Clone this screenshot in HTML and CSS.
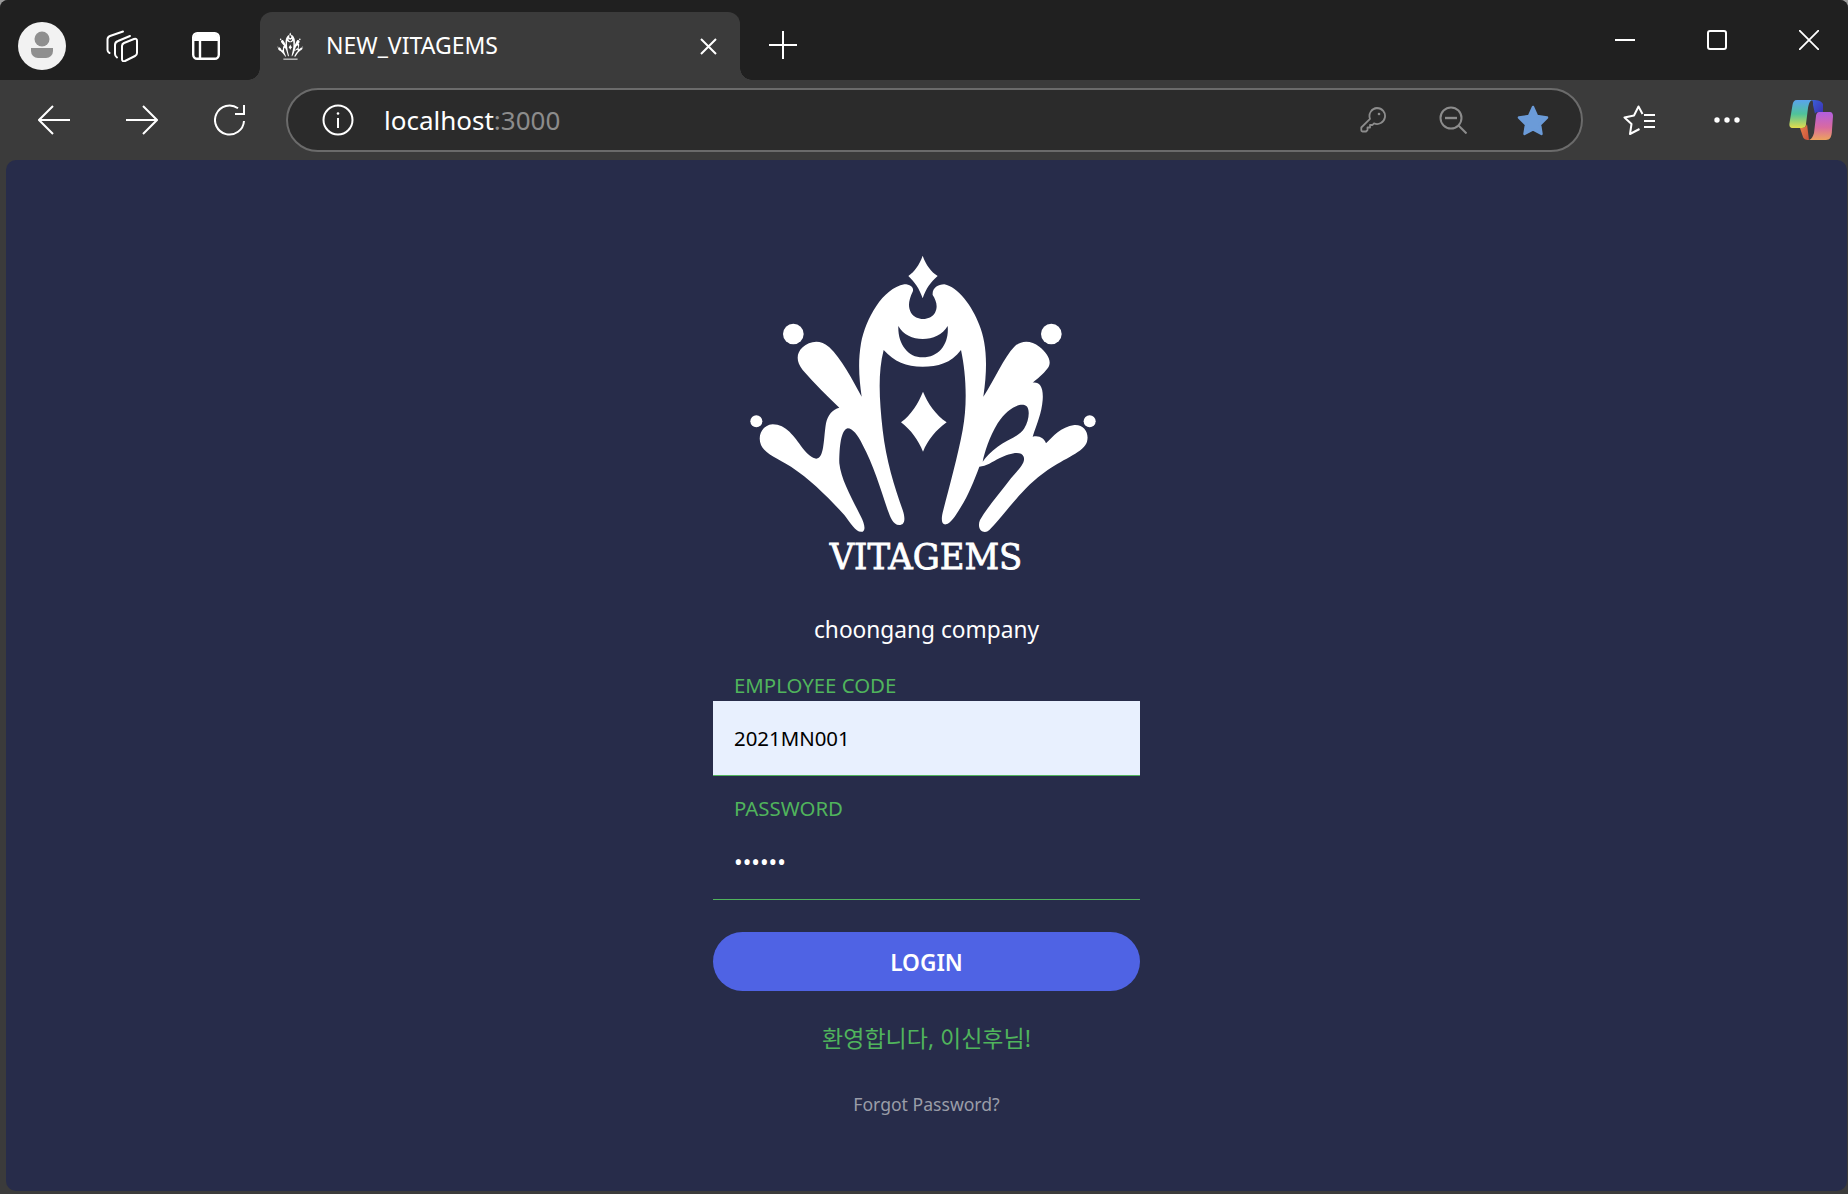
FILE: index.html
```html
<!DOCTYPE html>
<html lang="ko">
<head>
<meta charset="utf-8">
<title>NEW_VITAGEMS</title>
<link rel="stylesheet" href="styles.css">
</head>
<body>
<div class="window">
  <header class="titlebar">
    <div class="avatar">
      <svg width="48" height="48" viewBox="0 0 48 48"><circle cx="24" cy="24" r="24" fill="#f2f2f2"/><circle cx="24" cy="17" r="7.5" fill="#8f8f8f"/><path d="M13 26h22v3a7 7 0 0 1-7 7h-8a7 7 0 0 1-7-7z" fill="#8f8f8f"/></svg>
    </div>
    <svg class="ic-tabs" width="32" height="32" viewBox="0 0 32 32" fill="none" stroke="#fff" stroke-width="2" stroke-linecap="round" stroke-linejoin="round"><path d="M16 16q0-2 2-3l10-4q3-1 3 2v12q0 2-2 3l-10 5q-3 1-3-2z"/><path d="M24 6l-12 5q-3 1-3 4v9q0 2 2 3.500"/><path d="M17 1.500L4 6q-2.500 1-2.500 3.500V20q0 2 2 3"/></svg>
    <svg class="ic-vtabs" width="28" height="28" viewBox="0 0 28 28"><rect x="1.200" y="1.200" width="25.600" height="25.600" rx="4" fill="none" stroke="#fff" stroke-width="2.400"/><path d="M2 5a3 3 0 0 1 3-3h18a3 3 0 0 1 3 3v4H2z" fill="#fff"/><path d="M8 8v19" stroke="#fff" stroke-width="2.400"/></svg>
    <div class="tab">
      <svg class="favicon" width="29" height="31" viewBox="0 0 1170 1050" preserveAspectRatio="none"><use href="#mark"/><rect x="298" y="930" width="572" height="50" fill="#bbb"/></svg>
      <span class="tab-title">NEW_VITAGEMS</span>
      <svg class="tab-close" width="17" height="17" viewBox="0 0 17 17" stroke="#fff" stroke-width="2"><path d="M1 1l15 15M16 1L1 16"/></svg>
    </div>
    <svg class="ic-plus" width="28" height="28" viewBox="0 0 28 28" stroke="#fff" stroke-width="2"><path d="M14 0v28M0 14h28"/></svg>
    <div class="win-controls">
      <svg width="20" height="20" viewBox="0 0 20 20" stroke="#fff" stroke-width="2"><path d="M0 10h20"/></svg>
      <svg width="20" height="20" viewBox="0 0 20 20"><rect x="1" y="1" width="18" height="18" rx="2" fill="none" stroke="#fff" stroke-width="2"/></svg>
      <svg width="20" height="20" viewBox="0 0 20 20" stroke="#fff" stroke-width="1.800"><path d="M0 0l20 20M20 0L0 20"/></svg>
    </div>
  </header>

  <nav class="toolbar">
    <svg class="ic-back" width="32" height="30" viewBox="0 0 32 30" fill="none" stroke="#fff" stroke-width="2"><path d="M32 15H1M15 1L1 15l14 14"/></svg>
    <svg class="ic-forward" width="32" height="30" viewBox="0 0 32 30" fill="none" stroke="#fff" stroke-width="2"><path d="M0 15h31M17 1l14 14-14 14"/></svg>
    <svg class="ic-reload" width="32" height="32" viewBox="0 0 32 32" fill="none" stroke="#fff" stroke-width="2"><path d="M24 4.300A14.500 14.500 0 1 0 30 17"/><path d="M30 1v9H21"/></svg>
    <div class="address">
      <svg class="ic-info" width="32" height="32" viewBox="0 0 32 32" fill="none" stroke="#fff" stroke-width="2"><circle cx="16" cy="16" r="14.500"/><path d="M16 14v10"/><circle cx="16" cy="9.500" r="1.300" fill="#fff" stroke="none"/></svg>
      <span class="url">localhost<span class="url-port">:3000</span></span>
      <svg class="ic-key" width="26" height="26" viewBox="0 0 26 26" fill="none" stroke="#8c8c8c" stroke-width="1.800" stroke-linejoin="round"><path d="M17 1a8 8 0 1 1-3 15.400l-1.500 1.600H10v2.500H7.500V23L6 24.500H2.500a1.200 1.200 0 0 1-1.200-1.200V20.500L10 11.800A8 8 0 0 1 17 1z"/><circle cx="19" cy="7" r="1.300" fill="#8c8c8c" stroke="none"/></svg>
      <svg class="ic-zoom" width="28" height="28" viewBox="0 0 28 28" fill="none" stroke="#8c8c8c" stroke-width="2"><circle cx="12" cy="12" r="10.500"/><path d="M6 12h12" stroke-width="2.400"/><path d="M19.500 19.500l8 8"/></svg>
      <svg class="ic-star" width="32" height="31" viewBox="0 0 32 31"><path d="M16 2l4 9 10 1.500-7 7 1.500 9.500-8.500-4.500L7.500 29 9 19.500l-7-7L12 11z" fill="#6b9bd8" stroke="#6b9bd8" stroke-width="2.500" stroke-linejoin="round"/></svg>
    </div>
    <svg class="ic-fav" width="32" height="30" viewBox="0 0 32 30" fill="none" stroke="#fff" stroke-width="2" stroke-linejoin="round"><path d="M16.500 24L7 29l1.500-10-7-6.500 9.500-2L15.500 1.500 19.500 9"/><path d="M21 10h11M21 16h11M21 22h11"/></svg>
    <svg class="ic-more" width="26" height="6" viewBox="0 0 26 6" fill="#fff"><circle cx="3" cy="3" r="2.700"/><circle cx="13" cy="3" r="2.700"/><circle cx="23" cy="3" r="2.700"/></svg>
    <svg class="ic-copilot" width="44" height="40" viewBox="9 10 44 40">
      <defs>
        <linearGradient id="cpA" x1="0" y1="0" x2="0" y2="1"><stop offset="0" stop-color="#5aa3ee"/><stop offset=".5" stop-color="#4fc39a"/><stop offset="1" stop-color="#e3dc4c"/></linearGradient>
        <linearGradient id="cpB" x1="0" y1="0" x2="0" y2="1"><stop offset="0" stop-color="#b25fe0"/><stop offset=".55" stop-color="#d96aa0"/><stop offset="1" stop-color="#eda35d"/></linearGradient>
        <linearGradient id="cpC" x1="0" y1="0" x2="1" y2="1"><stop offset="0" stop-color="#3a62d8"/><stop offset="1" stop-color="#3c2fb0"/></linearGradient>
        <linearGradient id="cpD" x1="0" y1="0" x2="1" y2="1"><stop offset="0" stop-color="#e9824a"/><stop offset="1" stop-color="#c9503c"/></linearGradient>
      </defs>
      <path d="M31 10c5 0 10 0 12 4v8h-5c-2 0-3 1-3 2l-2-9c0-3 0-5-2-5z" fill="url(#cpC)"/>
      <path d="M20 38c4 0 6-1 7-4l2 16c-4 0-5-1-6-3z" fill="url(#cpD)"/>
      <path d="M17 10h16c-3 0-4 3-5 8l-2 16c0 3-2 4-5 4h-8c-3 0-4-2-3.500-5l3-18c.500-3 1.500-5 4.500-5z" fill="url(#cpA)"/>
      <path d="M40 22h10c2 0 3 2 3 4l-1 14c-.200 7-2 10-6 10H29c3-1 4-4 5-7l2-17c.500-2.500 1-4 4-4z" fill="url(#cpB)"/>
    </svg>
  </nav>

  <main class="page">
    <svg class="logo" width="390" height="350" viewBox="0 0 1170 1050" role="img" aria-label="VITAGEMS">
      <g id="mark" fill="#fff">
        <path d="M575 47C585 75 600 95 620 108C600 125 585 145 575 175C565 145 550 125 532 108C550 95 565 75 575 47Z"/>
        <path d="M576 455C590 490 615 525 647 547C615 570 590 600 576 635C562 600 540 570 510 547C540 525 562 490 576 455Z"/>
        <circle cx="187" cy="282" r="31"/><circle cx="961" cy="282" r="31"/><circle cx="76" cy="544" r="18"/><circle cx="1076" cy="544" r="18"/>
        <path fill-rule="evenodd" d="M545 155C533 180 530 200 540 218C555 243 598 243 612 218C622 200 615 180 605 165C603 145 620 133 640 133C680 140 725 200 745 255C765 305 772 370 757 470C790 420 820 350 850 320C870 300 900 300 925 320C950 340 965 365 950 385C935 405 920 415 905 428C925 425 938 440 935 480C932 520 918 550 905 590C925 585 940 595 945 610C965 590 990 560 1030 555C1060 553 1075 580 1068 605C1060 635 1000 655 950 690C900 725 870 760 840 795C815 825 795 850 775 870C760 885 735 870 747 840C770 800 810 755 840 715C860 690 885 670 878 650C870 630 835 640 805 655C785 665 765 680 745 680C730 720 710 770 690 800C675 825 660 850 645 853C630 855 630 835 637 810C655 740 680 650 695 570C710 490 705 400 690 330C660 370 620 380 575 380C525 380 490 365 458 330C440 400 445 480 455 570C465 660 490 740 515 810C525 840 520 855 505 855C485 855 478 830 470 810C450 750 425 670 395 615C380 585 365 565 350 565C330 570 325 620 325 670C330 720 365 780 390 830C400 850 405 870 395 875C375 880 360 850 340 825C290 770 240 720 180 680C140 655 100 640 90 615C78 585 95 555 125 553C165 553 190 590 215 625C230 645 250 660 260 655C280 650 278 590 285 550C290 525 305 508 325 503C290 470 250 430 215 390C195 365 195 340 215 322C235 305 265 295 295 322C330 355 365 420 392 470C385 420 380 370 390 310C405 235 455 145 520 133C540 133 550 145 545 155ZM755 665C760 640 775 590 800 550C825 510 860 490 880 495C900 500 895 540 880 565C865 590 825 600 800 620C780 635 765 650 755 665ZM502 258C530 310 620 310 650 258C655 310 625 352 575 352C530 352 500 310 502 258Z"/>
      </g>
      <text class="logo-word" x="296" y="988" textLength="578" lengthAdjust="spacingAndGlyphs">VITAGEMS</text>
    </svg>

    <form class="login">
      <p class="company">choongang company</p>
      <label class="field-label" for="code">EMPLOYEE CODE</label>
      <input class="field field-filled" id="code" type="text" value="2021MN001">
      <label class="field-label field-label-next" for="pw">PASSWORD</label>
      <input class="field field-secret" id="pw" type="password" value="123456">
      <button class="login-btn" type="button">LOGIN</button>
      <p class="welcome">환영합니다, 이신후님!</p>
      <a class="forgot">Forgot Password?</a>
    </form>
  </main>
</div>
</body>
</html>
```

FILE: styles.css
```css
* { box-sizing: border-box; }
html, body { margin: 0; height: 100%; }
body {
  background: #9a9a9a;
  font-family: "Noto Sans", "Noto Sans CJK KR", sans-serif;
  overflow: hidden;
}
svg { display: block; flex: none; }

.window {
  width: 1848px;
  height: 1194px;
  background: #3b3b3b;
  border-radius: 8px 8px 0 0;
  display: flex;
  flex-direction: column;
  overflow: hidden;
}

/* title bar */
.titlebar {
  height: 80px;
  flex: none;
  background: #202020;
  display: flex;
  align-items: center;
  padding-left: 18px;
  padding-top: 12px;
}
.avatar { width: 48px; height: 48px; }
.ic-tabs { margin-left: 40px; }
.ic-vtabs { margin-left: 54px; }
.tab {
  margin-left: 40px;
  align-self: stretch;
  width: 480px;
  background: #3b3b3b;
  border-radius: 12px 12px 0 0;
  position: relative;
  display: flex;
  align-items: center;
  padding: 0 23px 0 16px;
  color: #fff;
}
.tab::before, .tab::after {
  content: "";
  position: absolute;
  bottom: 0;
  width: 12px;
  height: 12px;
}
.tab::before { left: -12px; background: radial-gradient(circle at 0 0, transparent 11.500px, #3b3b3b 12px); }
.tab::after { right: -12px; background: radial-gradient(circle at 100% 0, transparent 11.500px, #3b3b3b 12px); }
.tab-title {
  margin-left: 21px;
  padding-bottom: 2px;
  font-size: 23px;
  line-height: 30px;
  flex: 1;
  white-space: nowrap;
}
.ic-plus { margin-left: 29px; margin-top: -2px; }
.win-controls {
  margin-left: auto;
  margin-right: 29px;
  margin-top: -12px;
  display: flex;
  gap: 72px;
}

/* toolbar */
.toolbar {
  height: 80px;
  flex: none;
  display: flex;
  align-items: center;
  padding-left: 38px;
}
.ic-forward { margin-left: 56px; }
.ic-reload { margin-left: 56px; }
.address {
  margin-left: 40px;
  width: 1297px;
  height: 64px;
  background: #2b2b2b;
  border: 2px solid #6b6b6b;
  border-radius: 32px;
  display: flex;
  align-items: center;
  padding-left: 34px;
}
.url {
  margin-left: 30px;
  font-size: 26px;
  line-height: 36px;
  color: #fff;
  white-space: nowrap;
}
.url-port { color: #8c8c8c; }
.ic-key { margin-left: auto; }
.ic-zoom { margin-left: 53px; }
.ic-star { margin-left: 50px; margin-right: 32px; }
.ic-fav { margin-left: 40px; }
.ic-more { margin-left: 59px; }
.ic-copilot { margin-left: 49px; }

/* page */
.page {
  margin: 0 1px 3px 6px;
  flex: 1;
  background: #272c4a;
  border-radius: 10px;
  display: flex;
  flex-direction: column;
  align-items: center;
  padding-top: 80px;
}
.logo { margin-right: 2px; }
.logo-word {
  font-family: "DejaVu Serif", serif;
  font-size: 106px;
  fill: #fff;
  stroke: #fff;
  stroke-width: 2.500px;
}
.login {
  width: 427px;
  margin-top: 20px;
  display: flex;
  flex-direction: column;
  text-align: center;
}
.company {
  margin: 0;
  height: 40px;
  line-height: 40px;
  font-size: 22.700px;
  color: #fff;
}
.field-label {
  display: block;
  height: 29px;
  margin-top: 22px;
  padding-left: 21px;
  text-align: left;
  font-size: 20.400px;
  line-height: 27px;
  color: #50b45c;
}
.field-label-next { margin-top: 19px; }
.field {
  display: block;
  width: 100%;
  height: 75px;
  border: 0;
  border-bottom: 1px solid #50b45c;
  border-radius: 0;
  background: transparent;
  padding: 0 21px;
  font: inherit;
  font-size: 20.400px;
  color: #fff;
  outline: none;
}
.field-secret { height: 76px; font-size: 23px; }
.field-filled { background: #e8f0fe; color: #000; }
.login-btn {
  margin-top: 32px;
  height: 59px;
  padding: 2px 0 0;
  border: 0;
  border-radius: 30px;
  background: #4f63e4;
  color: #fff;
  font: inherit;
  font-size: 22.700px;
  font-weight: 600;
}
.welcome {
  margin: 29px 0 0;
  height: 36px;
  line-height: 36px;
  font-size: 23px;
  color: #50b45c;
}
.forgot {
  display: block;
  margin-top: 33px;
  height: 30px;
  line-height: 30px;
  font-size: 17.600px;
  color: #9a9da8;
}
```
